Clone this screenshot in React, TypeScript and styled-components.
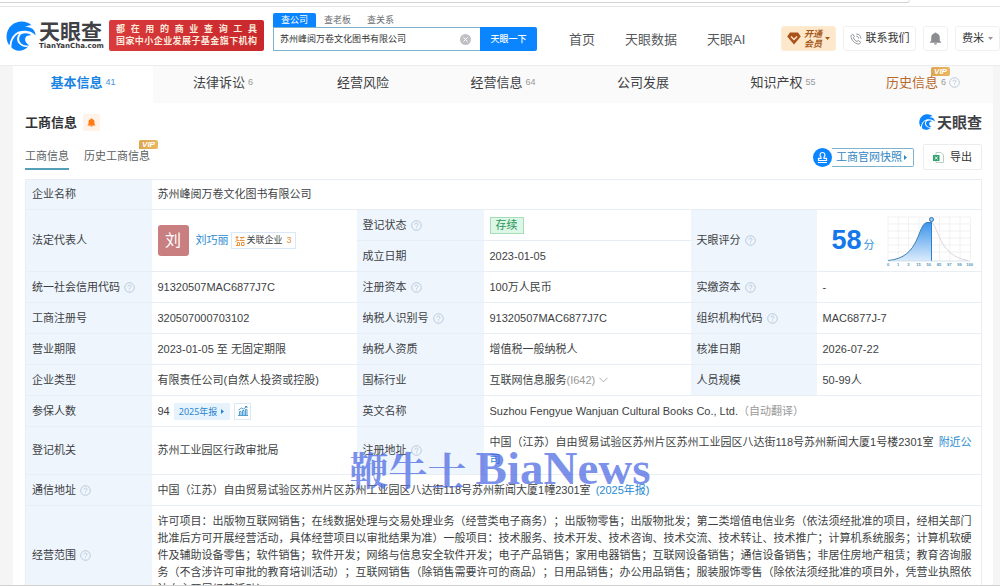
import React from "react";
import styled, { createGlobalStyle, css } from "styled-components";

const GlobalStyle = createGlobalStyle`
  * { box-sizing: border-box; }
  body {
    margin: 0;
    background: #f5f5f5;
    color: #3d3f43;
    font: 11px/17px "Liberation Sans", "Noto Sans CJK SC", sans-serif;
    text-spacing-trim: space-all;
  }
  button, input { font: inherit; color: inherit; }
  button { padding: 0; cursor: pointer; }
  a { color: inherit; text-decoration: none; }
  h1, h2, p, ul { margin: 0; padding: 0; }
  svg { display: block; flex: none; }
`;

const Frame = styled.div`
  position: relative;
  height: 100vh;
  overflow: hidden;
  border-bottom: 1px solid #cfcfcf;
`;

const BrowserEdge = styled.div`
  height: 7px;
  background: #fff;
  border-bottom: 1px solid #e6e6e6;
`;

const AddressBarEdge = styled.div`
  width: 91%;
  height: 3px;
  border-bottom: 1px solid #d2d2d2;
  border-right: 1px solid #e0e0e0;
  border-bottom-right-radius: 6px;
`;

/* ---------- header ---------- */

const Header = styled.header`
  display: flex;
  align-items: flex-end;
  height: 59px;
  padding: 0 0 14px 6px;
  background: #fff;
  border-bottom: 1px solid #ececec;
`;

const Brand = styled.a`
  display: flex;
  align-items: center;
  gap: 3px;
`;

const BrandText = styled.span`
  display: flex;
  flex-direction: column;
  width: 66px;
  color: #3a3a3c;
`;

const BrandName = styled.strong<{ $small?: boolean }>`
  font-size: ${(p) => (p.$small ? 15 : 21)}px;
  line-height: ${(p) => (p.$small ? 17 : 21)}px;
  font-weight: 700;
  color: #3f4145;
`;

const BrandDomain = styled.span`
  font: 700 7px/9px "DejaVu Sans", sans-serif;
`;

const Slogan = styled.div`
  width: 155px;
  height: 31px;
  margin-left: 4px;
  padding: 3px 7px;
  border-radius: 2px;
  background: linear-gradient(90deg, #d93a3c, #c8282c);
  color: #fbe9dc;
  font-size: 9px;
  font-weight: 700;
  line-height: 12px;
  text-align-last: justify;
  white-space: nowrap;
`;

const Search = styled.form`
  width: 264px;
  margin-left: 9px;
`;

const SearchTabs = styled.div`
  display: flex;
  height: 14px;
`;

const SearchTab = styled.button<{ $active?: boolean }>`
  width: 43px;
  border: 0;
  border-radius: 2px 2px 0 0;
  background: ${(p) => (p.$active ? "#0a84ff" : "transparent")};
  color: ${(p) => (p.$active ? "#fff" : "#6b6d70")};
  font-size: 9px;
  line-height: 14px;
`;

const SearchBox = styled.div`
  display: flex;
  height: 24px;
`;

const SearchField = styled.label`
  display: flex;
  flex: 1;
  align-items: center;
  min-width: 0;
  padding: 0 9px 0 6px;
  border: 1px solid #7db4cc;
  border-right: 0;
  background: #fff;
`;

const SearchInput = styled.input`
  flex: 1;
  min-width: 0;
  padding: 0;
  border: 0;
  outline: 0;
  font-size: 9px;
  line-height: 17px;
  color: #333;
`;

const IconButton = styled.button`
  border: 0;
  background: none;
`;

const SearchSubmit = styled.button`
  width: 57px;
  border: 0;
  border-radius: 0 2px 2px 0;
  background: #0a84ff;
  color: #fff;
  font-size: 9px;
  font-weight: 500;
`;

const Nav = styled.nav`
  display: flex;
  gap: 30px;
  margin-left: 32px;
  color: #55585c;
  font-size: 13px;
  line-height: 23px;
  white-space: nowrap;
`;

const Actions = styled.div`
  display: flex;
  gap: 7px;
  margin-left: auto;
`;

const ActionButton = styled.button<{ $width: number; $tone?: "gold" }>`
  display: flex;
  align-items: center;
  justify-content: center;
  gap: 4px;
  width: ${(p) => p.$width}px;
  height: 25px;
  border: 1px solid #efefef;
  border-radius: 3px;
  background: #fff;
  color: #333;
  white-space: nowrap;
  ${(p) =>
    p.$tone === "gold" &&
    css`
      gap: 3px;
      border-color: #fdebd3;
      background: #fde8cc;
      color: #a85a1c;
    `}
`;

const VipText = styled.span`
  font-size: 9px;
  font-weight: 700;
  font-style: italic;
  line-height: 10px;
`;

/* ---------- company tabs ---------- */

const Card = styled.main`
  margin: 0 7px 0 13px;
  background: #fff;
`;

const Tabs = styled.nav`
  display: grid;
  grid-template-columns: repeat(7, 1fr);
  height: 37px;
  background: #fafafa;
`;

const Tab = styled.a<{ $active?: boolean; $gold?: boolean }>`
  display: flex;
  align-items: center;
  justify-content: center;
  gap: 3px;
  padding-bottom: 4px;
  color: ${(p) => (p.$active ? "#1a84e4" : p.$gold ? "#b8682c" : "#3d3f43")};
  background: ${(p) => (p.$active ? "#fff" : "transparent")};
  font-size: 13px;
  font-weight: ${(p) => (p.$active ? 700 : 400)};
  white-space: nowrap;
`;

const Count = styled.span<{ $active?: boolean }>`
  color: ${(p) => (p.$active ? "#3f93da" : "#999")};
  font-size: 9px;
  font-weight: 400;
`;

const Badged = styled.span`
  position: relative;
`;

const VipBadge = styled.span<{ $tab?: boolean }>`
  position: absolute;
  top: ${(p) => (p.$tab ? -7 : -10)}px;
  right: ${(p) => (p.$tab ? -12 : -8)}px;
  width: 19px;
  height: 9px;
  border-radius: 2px 2px 2px 0;
  background: linear-gradient(90deg, #dfa54e, #e8b865);
  color: #fff;
  font: italic 700 8px/9px "Liberation Sans", sans-serif;
  text-align: center;
`;

/* ---------- section heading ---------- */

const Section = styled.section`
  padding: 0 11px 0 12px;
`;

const SectionHead = styled.div`
  display: flex;
  align-items: center;
  justify-content: space-between;
  height: 38px;
`;

const SectionTitle = styled.div`
  display: flex;
  align-items: center;
  gap: 6px;
  h2 { font-size: 13px; line-height: 17px; color: #303235; }
`;

const BellChip = styled.button`
  display: grid;
  place-items: center;
  width: 17px;
  height: 17px;
  border: 0;
  border-radius: 2px;
  background: #fff2e8;
`;

const SmallBrand = styled.div`
  display: flex;
  align-items: center;
  gap: 2px;
`;

const SubBar = styled.div`
  display: flex;
  justify-content: space-between;
  height: 38px;
`;

const SubTabs = styled.div`
  display: flex;
  gap: 15px;
`;

const SubTab = styled.button<{ $active?: boolean }>`
  height: 29px;
  padding-top: 4px;
  border: 0;
  border-bottom: 2px solid ${(p) => (p.$active ? "#559fb8" : "transparent")};
  background: none;
  color: #5c5f63;
`;

const SubActions = styled.div`
  display: flex;
  gap: 9px;
`;

const Snapshot = styled.button`
  display: flex;
  align-items: center;
  height: 19px;
  margin-top: 7px;
  padding: 0;
  border: 0;
  background: none;
  color: #2f86c4;
`;

const SnapshotLabel = styled.span`
  display: flex;
  align-items: center;
  gap: 2px;
  height: 19px;
  padding: 0 6px 0 4px;
  border: 1px solid #7fb3cc;
  border-left: 0;
  border-radius: 0 2px 2px 0;
  line-height: 17px;
`;

const ExportButton = styled.button`
  display: flex;
  align-items: center;
  justify-content: center;
  gap: 6px;
  width: 59px;
  height: 26px;
  margin-top: 3px;
  border: 1px solid #ececec;
  border-radius: 2px;
  background: #fff;
  color: #333;
`;

/* ---------- data table ---------- */

const Table = styled.table`
  width: 100%;
  table-layout: fixed;
  border-collapse: collapse;
  border: 1px solid #e9eef4;
`;

const Row = styled.tr<{ $height?: number }>`
  height: ${(p) => p.$height ?? 31}px;
  border-top: 1px solid #e9eef4;
`;

const Label = styled.th`
  padding: 0 6px;
  background: #eef5fd;
  font-weight: 400;
  text-align: left;
  vertical-align: middle;
`;

const Value = styled.td`
  padding: 0 6px;
  vertical-align: middle;
`;

const ScopeValue = styled(Value)`
  padding: 7px 0 6px 6px;
`;

const AddressValue = styled(Value)`
  padding-right: 5px;
`;

const Line = styled.div<{ $gap?: number }>`
  display: flex;
  align-items: center;
  gap: ${(p) => p.$gap ?? 4}px;
  white-space: nowrap;
`;

const Link = styled.a`
  color: #2a8ad0;
`;

const InlineLink = styled(Link)`
  margin-left: 5px;
`;

const Muted = styled.span`
  color: #999;
`;

const Avatar = styled.span`
  display: grid;
  place-items: center;
  width: 31px;
  height: 31px;
  margin-right: 5px;
  border-radius: 3px;
  background: #c97e80;
  color: #fff;
  font-size: 16px;
`;

const RelatedTag = styled.a`
  display: flex;
  align-items: center;
  gap: 2px;
  height: 17px;
  padding: 0 3px;
  border: 1px solid #dbe8f5;
  font-size: 9px;
  b { margin-left: 2px; color: #e8913c; font-weight: 400; }
`;

const StatusTag = styled.span`
  display: inline-block;
  padding: 0 5px;
  border: 1px solid #a5dcba;
  background: #ddf7e6;
  color: #27965a;
  line-height: 15px;
`;

const ReportTag = styled.a`
  display: flex;
  align-items: center;
  gap: 4px;
  height: 17px;
  padding: 0 6px 0 5px;
  background: #e6f3fd;
  color: #2a86d0;
  font-size: 9px;
  font-family: "Noto Sans", "Noto Sans CJK SC", sans-serif;
`;

const ChartButton = styled.button`
  display: grid;
  place-items: center;
  width: 17px;
  height: 17px;
  border: 1px solid #dceaf6;
  background: #fff;
`;

const Score = styled.div`
  display: flex;
  align-items: center;
  padding-left: 9px;
`;

const ScoreNumber = styled.span`
  display: flex;
  align-items: baseline;
  gap: 2px;
  width: 54px;
  color: #2f8fd8;
  white-space: nowrap;
  strong { font-size: 27px; line-height: 31px; color: #1478ea; }
`;

const Watermark = styled.div`
  position: absolute;
  top: 443px;
  left: 50%;
  display: flex;
  align-items: center;
  gap: 9px;
  transform: translateX(-50%);
  color: rgba(72, 102, 226, 0.72);
  font: 700 47px/50px "Liberation Serif", serif;
  white-space: nowrap;
  pointer-events: none;
`;

const WatermarkHan = styled.span`
  font-family: "Noto Serif CJK SC", "Noto Sans CJK SC", serif;
  font-size: 39px;
  line-height: 46px;
`;

/* ---------- drawings ---------- */

const EyeLogo = ({ size }: { size: number }) => (
  <svg width={size} height={size} viewBox="0 0 30 30" aria-hidden="true">
    <path
      fill="#0a84ff"
      d="M25.500 4.200C20.500 -.4 11.600 -.9 5.600 4.200C-.2 9.100 -1.200 18.400 3.400 24.600C4.300 17.600 7.800 12.500 13 10.600C17 9.100 22.300 9.800 25.500 11.200C27.300 12 28.700 13.300 29.500 14.500C29.600 11.700 28.200 9.200 26 7.600C24.200 6.300 21.500 5.700 19 6C21 4.800 23.300 4.200 25.500 4.200Z"
    />
    <path
      fill="#0a84ff"
      d="M5.500 26.700C5.200 19.500 8.300 14.200 13.300 12.400C10.600 15.600 10.500 19.400 12.600 22.200C14.600 24.900 18 26.300 22 25.800C19.200 28.600 15.500 30 12.500 29.700C9.700 29.400 7.400 28.300 5.500 26.700Z"
    />
    <path
      fill="#0a84ff"
      d="M15.200 13.300C18.600 11.400 23 12 25.400 14.300C22.600 13.900 20.500 14.700 19.500 16.600C18.500 19 19.400 22 23.500 24.500C18.500 25 14.600 23.200 13.400 19.700C12.700 17.400 13.400 14.900 15.200 13.300Z"
    />
  </svg>
);

const Help = () => (
  <svg width="11" height="11" viewBox="0 0 11 11" fill="none" stroke="#b4c6d6" role="img" aria-label="说明">
    <circle cx="5.500" cy="5.500" r="4.800" strokeWidth=".9" />
    <path d="M4 4.500C4 2.500 7 2.600 7 4.400C7 5.500 5.500 5.500 5.500 6.700M5.500 7.600V8.400" strokeWidth=".9" />
  </svg>
);

const Bell = ({ size, color }: { size: number; color: string }) => (
  <svg width={size} height={size} viewBox="0 0 14 14" fill={color} aria-hidden="true">
    <path d="M7 .5a1 1 0 0 1 1 .9c2.200.5 3.600 2.200 3.600 4.500v3.600l1.400 1.300v.7H1v-.7l1.400-1.300V5.900C2.400 3.600 3.800 1.900 6 1.400A1 1 0 0 1 7 .5ZM5.300 12.200h3.400a1.700 1.400 0 0 1-3.400 0Z" />
  </svg>
);

const Caret = ({ color, right }: { color: string; right?: boolean }) => (
  <svg width={right ? 3 : 5} height={right ? 5 : 3} viewBox={right ? "0 0 3 5" : "0 0 5 3"} fill={color} aria-hidden="true">
    <path d={right ? "M0 0L3 2.500L0 5Z" : "M0 0H5L2.500 3Z"} />
  </svg>
);

const ClearIcon = () => (
  <svg width="11" height="11" viewBox="0 0 11 11" aria-hidden="true">
    <circle cx="5.500" cy="5.500" r="5.500" fill="#bfc1c4" />
    <path d="M3.500 3.500L7.500 7.500M7.500 3.500L3.500 7.500" stroke="#fff" />
  </svg>
);

const Diamond = () => (
  <svg width="14" height="13" viewBox="0 0 14 13" aria-hidden="true">
    <path d="M3 .5H11L13.800 4.500L7 12.500L.2 4.500Z" fill="#a9521a" />
    <path d="M4 4.500L7 7.500L10 4.500" fill="none" stroke="#fde8cc" strokeWidth="1.400" />
  </svg>
);

const Phone = () => (
  <svg width="12" height="12" viewBox="0 0 12 12" fill="none" stroke="#85888c" strokeWidth=".9" aria-hidden="true">
    <path d="M2.800 1.200L4.300 3.400L3.400 4.800C4 6.300 5.400 7.800 7 8.500L8.400 7.600L10.700 9.200C10.300 10.600 9.300 11.200 8.200 11C4.600 10.500 1.200 6.800 1 3.500C1 2.300 1.800 1.500 2.800 1.200Z" />
    <path d="M6.300 3.200C7.700 3.300 8.600 4.200 8.700 5.600M6.300 1C9 1.100 10.800 3 10.900 5.600" />
  </svg>
);

const Stamp = () => (
  <svg width="19" height="19" viewBox="0 0 19 19" aria-hidden="true">
    <circle cx="9.500" cy="9.500" r="9.500" fill="#0a84ff" />
    <path
      d="M8 9.200C6.300 7.400 7 4.500 9.500 4.500S12.700 7.400 11 9.200V10.300H13.500V12.500H5.500V10.300H8ZM5 14.500H14"
      fill="none"
      stroke="#fff"
      strokeWidth="1.200"
    />
  </svg>
);

const SheetIcon = () => (
  <svg width="11" height="11" viewBox="0 0 11 11" aria-hidden="true">
    <path d="M3 .5H8L10.500 3V10.500H3Z" fill="#fff" stroke="#b9cfc4" />
    <path d="M0 3H6.500V9H0Z" fill="#2fa36b" />
    <path d="M2 4.500L4.500 7.500M4.500 4.500L2 7.500" stroke="#fff" strokeWidth=".9" />
  </svg>
);

const RelationIcon = () => (
  <svg width="10" height="10" viewBox="0 0 10 10" fill="none" stroke="#e8913c" aria-hidden="true">
    <path d="M.5 1.500H3.500M2 0V4.500L.5 6M5 1.500H9.500M6 3.500L8.500 .5M4.500 4.500H9.500M2 4.500H4M2.500 9.500V6.500H4.500V9.500H1M6.500 9.500V6.500H9V9.500Z" />
  </svg>
);

const TrendIcon = () => (
  <svg width="10" height="10" viewBox="0 0 10 10" fill="none" stroke="#3f93cc" strokeWidth=".9" aria-hidden="true">
    <path d="M0 9.500H10M1.500 9V5.500H3V9M4.500 9V4.500H6V9M7.500 9V3.500H9V9M.5 4L3.500 2L5.500 3L9 .5M7 .5H9V2" />
  </svg>
);

const Chevron = () => (
  <svg width="9" height="6" viewBox="0 0 9 6" fill="none" stroke="#aaa" aria-hidden="true">
    <path d="M.5 .8L4.500 4.800L8.500 .8" />
  </svg>
);

const AXIS = ["0", "1", "3", "15", "50", "85", "97", "99", "100"];

const ScoreChart = () => (
  <svg width="88" height="52" viewBox="0 0 88 52" role="img" aria-label="评分分布">
    <defs>
      <linearGradient id="area" x1="0" y1="0" x2="0" y2="1">
        <stop offset="0" stopColor="#3d94ec" />
        <stop offset="1" stopColor="#dcecfb" />
      </linearGradient>
    </defs>
    <g stroke="#ecebee" strokeWidth=".7">
      {AXIS.map((_, i) => (
        <path key={i} d={`M${2 + i * 10.3} 2V46`} />
      ))}
      {[2, 9, 16, 23, 30, 37].map((y) => (
        <path key={y} d={`M2 ${y}H84.400`} />
      ))}
    </g>
    <path d="M45.500 7C53 13 53 41 82 45.500" fill="none" stroke="#ddd5dc" />
    <path d="M2 45.500C35 43 31 9 41 7.500H45.500V46H2Z" fill="url(#area)" />
    <path d="M2 45.500C35 43 31 9 41 7.500H45.500" fill="none" stroke="#3c7fae" />
    <path d="M45.500 7V46" stroke="#2b7fd0" />
    <path d="M2 46H84" stroke="#b9d3e2" strokeWidth=".6" />
    <circle cx="45.500" cy="4.500" r="2" fill="#9cc8ee" stroke="#2b74b4" />
    <g fill="#4e96b4" fontSize="4" fontWeight="700" textAnchor="middle">
      {AXIS.map((t, i) => (
        <text key={t} x={2 + i * 10.2} y="51">
          {t}
        </text>
      ))}
    </g>
  </svg>
);

/* ---------- page ---------- */

const TABS = [
  { name: "基本信息", count: 41, active: true },
  { name: "法律诉讼", count: 6 },
  { name: "经营风险" },
  { name: "经营信息", count: 64 },
  { name: "公司发展" },
  { name: "知识产权", count: 55 },
  { name: "历史信息", count: 6, vip: true },
];

const Field = ({ name, help, span }: { name: string; help?: boolean; span?: number }) => (
  <Label scope="row" rowSpan={span}>
    <Line>
      {name}
      {help && <Help />}
    </Line>
  </Label>
);

export default function App() {
  return (
    <Frame>
      <GlobalStyle />
      <BrowserEdge>
        <AddressBarEdge />
      </BrowserEdge>

      <Header>
        <Brand href="#">
          <EyeLogo size={30} />
          <BrandText>
            <BrandName>天眼查</BrandName>
            <BrandDomain>TianYanCha.com</BrandDomain>
          </BrandText>
        </Brand>
        <Slogan>
          <div>都在用的商业查询工具</div>
          <div>国家中小企业发展子基金旗下机构</div>
        </Slogan>
        <Search onSubmit={(e) => e.preventDefault()}>
          <SearchTabs>
            <SearchTab type="button" $active>查公司</SearchTab>
            <SearchTab type="button">查老板</SearchTab>
            <SearchTab type="button">查关系</SearchTab>
          </SearchTabs>
          <SearchBox>
            <SearchField>
              <SearchInput aria-label="搜索公司" defaultValue="苏州峰阅万卷文化图书有限公司" />
              <IconButton type="button" aria-label="清除">
                <ClearIcon />
              </IconButton>
            </SearchField>
            <SearchSubmit type="submit">天眼一下</SearchSubmit>
          </SearchBox>
        </Search>
        <Nav>
          <a href="#">首页</a>
          <a href="#">天眼数据</a>
          <a href="#">天眼AI</a>
        </Nav>
        <Actions>
          <ActionButton $width={55} $tone="gold">
            <Diamond />
            <VipText>
              开通
              <br />
              会员
            </VipText>
            <Caret color="#a85a1c" />
          </ActionButton>
          <ActionButton $width={73}>
            <Phone />
            联系我们
          </ActionButton>
          <ActionButton $width={25} aria-label="通知">
            <Bell size={13} color="#8b8d90" />
          </ActionButton>
          <ActionButton $width={45}>
            费米
            <Caret color="#999" />
          </ActionButton>
        </Actions>
      </Header>

      <Card>
        <Tabs>
          {TABS.map((t) => (
            <Tab key={t.name} href="#" $active={t.active} $gold={t.vip}>
              <Badged>
                {t.name}
                {t.vip && <VipBadge $tab>VIP</VipBadge>}
              </Badged>
              {t.count && <Count $active={t.active}>{t.count}</Count>}
              {t.vip && <Help />}
            </Tab>
          ))}
        </Tabs>

        <Section>
          <SectionHead>
            <SectionTitle>
              <h2>工商信息</h2>
              <BellChip aria-label="监控">
                <Bell size={9} color="#ff7a12" />
              </BellChip>
            </SectionTitle>
            <SmallBrand>
              <EyeLogo size={16} />
              <BrandName $small>天眼查</BrandName>
            </SmallBrand>
          </SectionHead>

          <SubBar>
            <SubTabs>
              <SubTab $active>工商信息</SubTab>
              <SubTab>
                <Badged>
                  历史工商信息
                  <VipBadge>VIP</VipBadge>
                </Badged>
              </SubTab>
            </SubTabs>
            <SubActions>
              <Snapshot>
                <Stamp />
                <SnapshotLabel>
                  工商官网快照
                  <Caret right color="#2f86c4" />
                </SnapshotLabel>
              </Snapshot>
              <ExportButton>
                <SheetIcon />
                导出
              </ExportButton>
            </SubActions>
          </SubBar>

          <Table>
            <colgroup>
              <col width="126" />
              <col width="205" />
              <col width="127" />
              <col width="207" />
              <col width="126" />
              <col />
            </colgroup>
            <tbody>
              <Row $height={30}>
                <Field name="企业名称" />
                <Value colSpan={5}>苏州峰阅万卷文化图书有限公司</Value>
              </Row>
              <Row>
                <Field name="法定代表人" span={2} />
                <Value rowSpan={2}>
                  <Line $gap={2}>
                    <Avatar>刘</Avatar>
                    <Link href="#">刘巧丽</Link>
                    <RelatedTag href="#">
                      <RelationIcon />
                      关联企业<b>3</b>
                    </RelatedTag>
                  </Line>
                </Value>
                <Field name="登记状态" help />
                <Value>
                  <StatusTag>存续</StatusTag>
                </Value>
                <Field name="天眼评分" help span={2} />
                <Value rowSpan={2}>
                  <Score>
                    <ScoreNumber>
                      <strong>58</strong>分
                    </ScoreNumber>
                    <ScoreChart />
                  </Score>
                </Value>
              </Row>
              <Row>
                <Field name="成立日期" />
                <Value>2023-01-05</Value>
              </Row>
              <Row>
                <Field name="统一社会信用代码" help />
                <Value>91320507MAC6877J7C</Value>
                <Field name="注册资本" help />
                <Value>100万人民币</Value>
                <Field name="实缴资本" help />
                <Value>-</Value>
              </Row>
              <Row>
                <Field name="工商注册号" />
                <Value>320507000703102</Value>
                <Field name="纳税人识别号" help />
                <Value>91320507MAC6877J7C</Value>
                <Field name="组织机构代码" help />
                <Value>MAC6877J-7</Value>
              </Row>
              <Row>
                <Field name="营业期限" />
                <Value>2023-01-05 至 无固定期限</Value>
                <Field name="纳税人资质" />
                <Value>增值税一般纳税人</Value>
                <Field name="核准日期" />
                <Value>2026-07-22</Value>
              </Row>
              <Row>
                <Field name="企业类型" />
                <Value>有限责任公司(自然人投资或控股)</Value>
                <Field name="国标行业" />
                <Value>
                  <Line>
                    <span>
                      互联网信息服务<Muted>(I642)</Muted>
                    </span>
                    <Chevron />
                  </Line>
                </Value>
                <Field name="人员规模" />
                <Value>50-99人</Value>
              </Row>
              <Row>
                <Field name="参保人数" />
                <Value>
                  <Line>
                    94
                    <ReportTag href="#">
                      2025年报
                      <Caret right color="#2a86d0" />
                    </ReportTag>
                    <ChartButton aria-label="趋势">
                      <TrendIcon />
                    </ChartButton>
                  </Line>
                </Value>
                <Field name="英文名称" />
                <Value colSpan={3}>
                  Suzhou Fengyue Wanjuan Cultural Books Co., Ltd.
                  <Muted>（自动翻译）</Muted>
                </Value>
              </Row>
              <Row $height={48}>
                <Field name="登记机关" />
                <Value>苏州工业园区行政审批局</Value>
                <Field name="注册地址" help />
                <AddressValue colSpan={3}>
                  中国（江苏）自由贸易试验区苏州片区苏州工业园区八达街118号苏州新闻大厦1号楼2301室
                  <InlineLink href="#">附近公司</InlineLink>
                </AddressValue>
              </Row>
              <Row>
                <Field name="通信地址" help />
                <Value colSpan={5}>
                  中国（江苏）自由贸易试验区苏州片区苏州工业园区八达街118号苏州新闻大厦1幢2301室
                  <InlineLink href="#">(2025年报)</InlineLink>
                </Value>
              </Row>
              <Row>
                <Field name="经营范围" help />
                <ScopeValue colSpan={5}>
                  许可项目：出版物互联网销售；在线数据处理与交易处理业务（经营类电子商务）；出版物零售；出版物批发；第二类增值电信业务（依法须经批准的项目，经相关部门批准后方可开展经营活动，具体经营项目以审批结果为准）一般项目：技术服务、技术开发、技术咨询、技术交流、技术转让、技术推广；计算机系统服务；计算机软硬件及辅助设备零售；软件销售；软件开发；网络与信息安全软件开发；电子产品销售；家用电器销售；互联网设备销售；通信设备销售；非居住房地产租赁；教育咨询服务（不含涉许可审批的教育培训活动）；互联网销售（除销售需要许可的商品）；日用品销售；办公用品销售；服装服饰零售（除依法须经批准的项目外，凭营业执照依法自主开展经营活动）
                </ScopeValue>
              </Row>
            </tbody>
          </Table>
        </Section>
      </Card>

      <Watermark>
        <WatermarkHan>鞭牛士</WatermarkHan>
        BiaNews
      </Watermark>
    </Frame>
  );
}
